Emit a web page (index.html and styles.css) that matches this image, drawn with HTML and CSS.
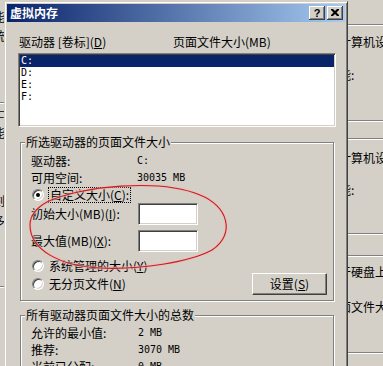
FILE: index.html
```html
<!DOCTYPE html>
<html lang="zh-CN">
<head>
<meta charset="utf-8">
<title>虚拟内存</title>
<link rel="stylesheet" href="styles.css">
</head>
<body>
<div class="desk">
  <div class="bg-left">
    <div class="bt t1">能</div>
    <div class="bt t2">统</div>
    <div class="bline l1"></div>
    <div class="bt t3">士</div>
    <div class="bt t4">能</div>
    <div class="bt t5">刻</div>
    <div class="bt t6">多</div>
    <div class="bline l2"></div>
  </div>
  <div class="bg-right">
    <div class="bline r1"></div>
    <div class="bt s1 ind">计算机设置</div>
    <div class="bt s2">性能:</div>
    <div class="bline r2"></div>
    <div class="bline r3"></div>
    <div class="bt s3 ind">计算机设置</div>
    <div class="bt s4">性能:</div>
    <div class="bline r4"></div>
    <div class="bline r5"></div>
    <div class="bt s5 ind">于硬盘上</div>
    <div class="bt s6 ind">面文件大小</div>
    <div class="bline r6"></div>
  </div>

  <div class="dialog">
    <div class="titlebar">
      <span class="title">虚拟内存</span>
      <div class="tbtns">
        <span class="tbtn help">?</span>
        <span class="tbtn close"><svg width="8" height="7" viewBox="0 0 8 7"><path d="M0 0h2l2 2 2-2h2v1L5.5 3.5 8 6v1H6L4 5 2 7H0V6l2.5-2.5L0 1z" fill="#000"/></svg></span>
      </div>
    </div>
    <div class="body">
      <div class="hdr"><span class="h1">驱动器 [卷标](<u>D</u>)</span><span class="h2">页面文件大小(MB)</span></div>
      <div class="listbox">
        <div class="lrow sel">C:</div>
        <div class="lrow">D:</div>
        <div class="lrow">E:</div>
        <div class="lrow">F:</div>
      </div>

      <fieldset class="group g1">
        <legend>所选驱动器的页面文件大小</legend>
        <div class="gin">
          <div class="info">
            <span>驱动器:</span><span class="val">C:</span>
            <span>可用空间:</span><span class="val">30035 MB</span>
          </div>
          <div class="rrow r-custom"><span class="radio on"></span><span class="rlabel focus">自定义大小(<u>C</u>):</span></div>
          <div class="field f1"><span class="flabel">初始大小(MB)(<u>I</u>):</span><span class="input"></span></div>
          <div class="field f2"><span class="flabel">最大值(MB)(<u>X</u>):</span><span class="input"></span></div>
          <div class="rrow r-sys"><span class="radio"></span><span class="rlabel">系统管理的大小(<u>Y</u>)</span></div>
          <div class="lastrow">
            <div class="rrow"><span class="radio"></span><span class="rlabel">无分页文件(<u>N</u>)</span></div>
            <span class="btn">设置(<u>S</u>)</span>
          </div>
        </div>
      </fieldset>

      <fieldset class="group g2">
        <legend>所有驱动器页面文件大小的总数</legend>
        <div class="gin">
          <div class="info info2">
            <span>允许的最小值:</span><span class="val">2 MB</span>
            <span>推荐:</span><span class="val">3070 MB</span>
            <span>当前已分配:</span><span class="val">0 MB</span>
          </div>
        </div>
      </fieldset>
    </div>
  </div>

  <svg class="mark" width="383" height="366" viewBox="0 0 383 366">
    <path d="M47 202C80 186 160 178 200 195C228 206 236 234 212 250C190 262 140 270 100 268C60 266 30 250 30 225C30 215 38 207 47 202Z" fill="none" stroke="#f2b4b4" stroke-width="3" opacity="0.6"/>
    <path d="M47 202C80 186 160 178 200 195C228 206 236 234 212 250C190 262 140 270 100 268C60 266 30 250 30 225C30 215 38 207 47 202Z" fill="none" stroke="#c81e1e" stroke-width="1.1"/>
  </svg>
</div>
</body>
</html>
```

FILE: styles.css
```css
html, body {
  margin: 0;
  padding: 0;
}
body {
  width: 383px;
  height: 366px;
  overflow: hidden;
  background: #d4d0c8;
  font-family: "Noto Sans CJK SC", "Noto Sans", sans-serif;
  font-size: 12px;
  line-height: 14px;
  color: #000;
}
u {
  text-decoration: underline;
  text-underline-offset: 1px;
}
.desk {
  position: relative;
  width: 383px;
  height: 366px;
  overflow: hidden;
  background: #d4d0c8;
}

/* background windows */
.bg-left {
  position: absolute;
  left: -7px;
  top: 0;
  width: 12px;
}
.bg-right {
  position: absolute;
  left: 327px;
  top: 0;
  width: 80px;
}
.bt {
  height: 14px;
  line-height: 14px;
  white-space: nowrap;
}
.ind {
  padding-left: 12px;
}
.bline {
  height: 1px;
  background: #808080;
  box-shadow: 0 1px #fff;
}
.t1 { margin-top: 10px; }
.t2 { margin-top: 5px; }
.l1 { margin-top: 59px; }
.t3 { margin-top: 3px; }
.t4 { margin-top: 6px; }
.t5 { margin-top: 54px; }
.t6 { margin-top: 6px; }
.l2 { margin-top: 58px; }

.r1 { margin-top: 24px; }
.s1 { margin-top: 10px; }
.s2 { margin-top: 19px; }
.r2 { margin-top: 38px; }
.r3 { margin-top: 17px; }
.s3 { margin-top: 12px; }
.s4 { margin-top: 18px; }
.r4 { margin-top: 36px; }
.r5 { margin-top: 21px; }
.s5 { margin-top: 9px; }
.s6 { margin-top: 21px; }
.r6 { margin-top: 38px; }

/* dialog window */
.dialog {
  position: absolute;
  left: 4px;
  top: 1px;
  width: 344px;
  height: 390px;
  box-sizing: border-box;
  border: 1px solid;
  border-color: #d4d0c8 #404040 #404040 #d4d0c8;
  box-shadow: inset 1px 1px #fff, inset -1px -1px #808080;
  padding: 2px;
  background: #d4d0c8;
}
.titlebar {
  height: 18px;
  background: linear-gradient(to right, #0a246a, #a6caf0);
  display: flex;
  align-items: center;
  justify-content: space-between;
  padding: 0 2px 0 2px;
}
.title {
  color: #fff;
  font-weight: bold;
  font-size: 12px;
  line-height: 14px;
  padding-left: 1px;
}
.tbtns {
  display: flex;
  gap: 2px;
}
.tbtn {
  width: 16px;
  height: 14px;
  box-sizing: border-box;
  background: #d4d0c8;
  box-shadow: inset -1px -1px #404040, inset 1px 1px #fff, inset -2px -2px #808080;
  display: flex;
  align-items: center;
  justify-content: center;
}
.help {
  font-family: "Liberation Sans", Arial, sans-serif;
  font-weight: bold;
  font-size: 11px;
  line-height: 12px;
  padding-bottom: 1px;
}
.close svg {
  display: block;
  margin-top: -1px;
}

.body {
  padding: 13px 9px 0 11px;
}
.hdr {
  display: grid;
  grid-template-columns: 155px 1fr;
  height: 14px;
  line-height: 14px;
  white-space: nowrap;
}
.h1 {
  padding-left: 1px;
}
.listbox {
  margin-top: 4px;
  height: 74px;
  box-sizing: border-box;
  background: #fff;
  border: 1px solid;
  border-color: #808080 #fff #fff #808080;
  box-shadow: inset 1px 1px #404040, inset -1px -1px #d4d0c8;
  padding: 1px;
}
.lrow {
  height: 12px;
  line-height: 12px;
  padding-left: 1px;
  font-family: "DejaVu Sans Mono", "Liberation Mono", monospace;
  font-size: 10px;
}
.lrow.sel {
  background: #0a246a;
  color: #fff;
}

/* group boxes */
.group {
  margin: 9px 2px 0;
  padding: 0 0 5px;
  border: 1px solid #808080;
  box-shadow: inset 1px 1px #fff, 1px 1px #fff;
  min-width: 0;
}
.group legend {
  margin-left: 4px;
  padding: 0 1px;
  line-height: 12px;
  background: #d4d0c8;
  white-space: nowrap;
}
.g2 {
  margin-top: 8px;
}
.gin {
  padding: 0 6px 0 10px;
}
.info {
  margin-top: 4px;
  display: grid;
  grid-template-columns: 106px 1fr;
  grid-auto-rows: 17px;
  align-items: center;
  white-space: nowrap;
}
.info2 {
  margin-top: 3px;
  grid-template-columns: 107px 1fr;
}
.val {
  font-family: "DejaVu Sans Mono", "Liberation Mono", monospace;
  font-size: 10px;
}
.rrow {
  display: flex;
  align-items: center;
  white-space: nowrap;
}
.r-custom {
  margin-top: 1px;
  height: 16px;
}
.r-sys {
  margin-top: 6px;
  height: 15px;
}
.radio {
  flex: none;
  width: 12px;
  height: 12px;
  margin-left: 1px;
  box-sizing: border-box;
  border-radius: 50%;
  background: #fff;
  border: 1px solid;
  border-color: #808080 #fff #fff #808080;
  box-shadow: inset 1px 1px #404040, inset -1px -1px #d4d0c8;
  position: relative;
}
.radio.on::after {
  content: "";
  position: absolute;
  left: 3px;
  top: 3px;
  width: 4px;
  height: 4px;
  border-radius: 50%;
  background: #000;
}
.rlabel {
  margin-left: 5px;
  line-height: 14px;
}
.rlabel.focus {
  margin-left: 4px;
  padding: 0 1px;
  border: 1px dotted #000;
}
.field {
  display: grid;
  grid-template-columns: 107px 60px;
  align-items: center;
  white-space: nowrap;
}
.f2 {
  margin-top: 5px;
}
.input {
  width: 60px;
  height: 22px;
  box-sizing: border-box;
  background: #fff;
  border: 1px solid;
  border-color: #808080 #fff #fff #808080;
  box-shadow: inset 1px 1px #404040, inset -1px -1px #d4d0c8;
}
.lastrow {
  display: flex;
  align-items: center;
  justify-content: space-between;
  height: 22px;
}
.btn {
  width: 75px;
  height: 22px;
  box-sizing: border-box;
  background: #d4d0c8;
  border: 1px solid;
  border-color: #fff #404040 #404040 #fff;
  box-shadow: inset -1px -1px #808080;
  display: flex;
  align-items: center;
  justify-content: center;
  white-space: nowrap;
}

.mark {
  position: absolute;
  left: 0;
  top: 0;
  pointer-events: none;
}
```
